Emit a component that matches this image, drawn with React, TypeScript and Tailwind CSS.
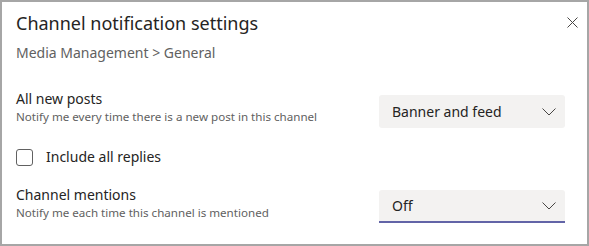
function Chevron() {
  return (
    <svg width="14" height="8" viewBox="0 0 14 8" fill="none" className="text-[#484644]">
      <path d="M0.5 0.5 L7 7 L13.5 0.5" stroke="currentColor" strokeWidth="1" />
    </svg>
  )
}

export default function App() {
  return (
    <div
      className="w-[589px] h-[246px] bg-white border-2 border-[#a6a6a6] text-[#252423] relative"
      style={{ fontFamily: '"Segoe UI", "Noto Sans", sans-serif' }}
    >
      <button className="absolute right-[7px] top-[12px] w-4 h-4 flex items-center justify-center text-[#484644]">
        <svg width="11" height="11" viewBox="0 0 11 11">
          <path d="M0.5 0.5 L10.5 10.5 M10.5 0.5 L0.5 10.5" stroke="currentColor" strokeWidth="1" />
        </svg>
      </button>

      <div className="pl-[14px] pr-[22px] pt-[8px]">
        <h1 className="text-[18px] leading-[26px] font-normal">Channel notification settings</h1>
        <div className="mt-[7px] text-[14px] leading-[20px] text-[#616161]">Media Management &gt; General</div>

        {/* All new posts */}
        <div className="mt-[26px] flex items-start justify-between">
          <div>
            <div className="text-[14px] leading-[20px]">All new posts</div>
            <div className="text-[11.6px] leading-[16px] text-[#616161]">Notify me every time there is a new post in this channel</div>
          </div>
          <div className="mt-[6px] w-[186px] h-[33px] bg-[#f3f2f1] rounded-[3px] flex items-center justify-between pl-[13px] pr-[9px]">
            <span className="text-[14px]">Banner and feed</span>
            <Chevron />
          </div>
        </div>

        <label className="mt-[19px] flex items-center gap-[13px]">
          <span className="w-[17px] h-[17px] border border-[#616161] rounded-[3px]" />
          <span className="text-[14px] leading-[20px]">Include all replies</span>
        </label>

        {/* Channel mentions */}
        <div className="mt-[18px] flex items-start justify-between">
          <div>
            <div className="text-[14px] leading-[20px]">Channel mentions</div>
            <div className="text-[11.6px] leading-[16px] text-[#616161]">Notify me each time this channel is mentioned</div>
          </div>
          <div className="mt-[5px] w-[186px] h-[33px] bg-[#f3f2f1] rounded-t-[3px] border-b-2 border-[#6264a7] flex items-center justify-between pl-[13px] pr-[9px]">
            <span className="text-[14px]">Off</span>
            <Chevron />
          </div>
        </div>
      </div>
    </div>
  )
}
